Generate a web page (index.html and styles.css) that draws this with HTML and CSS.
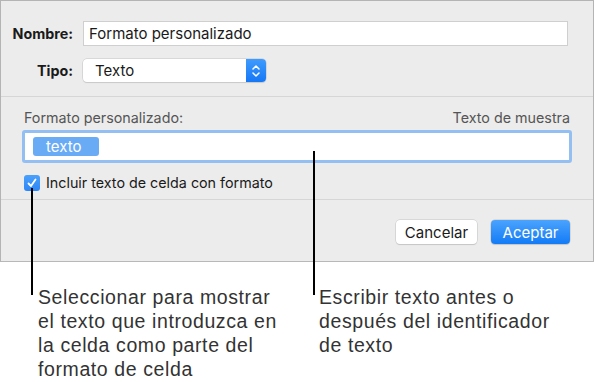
FILE: index.html
```html
<!DOCTYPE html>
<html lang="es">
<head>
  <meta charset="UTF-8">
  <meta name="viewport" content="width=device-width, initial-scale=1.0">
  <title>Formato personalizado</title>
  <link rel="stylesheet" href="styles.css">
</head>
<body>
  <div class="page">
    <div class="dialog">
      <div class="top">
        <label class="label" for="nombre">Nombre:</label>
        <div class="textfield" id="nombre">Formato personalizado</div>

        <label class="label" for="tipo">Tipo:</label>
        <div class="select" id="tipo">
          <span class="select-value">Texto</span>
          <span class="stepper">
            <svg width="10" height="16" viewBox="0 0 10 16">
              <path d="M2 6 L5 3 L8 6" fill="none" stroke="#fff" stroke-width="1.5" stroke-linecap="round" stroke-linejoin="round"/>
              <path d="M2 10 L5 13 L8 10" fill="none" stroke="#fff" stroke-width="1.5" stroke-linecap="round" stroke-linejoin="round"/>
            </svg>
          </span>
        </div>
      </div>

      <div class="middle">
        <div class="format-head">
          <span>Formato personalizado:</span>
          <span>Texto de muestra</span>
        </div>
        <div class="format-field">
          <span class="token">texto</span>
        </div>
        <div class="check-row">
          <span class="checkbox">
            <svg width="12" height="12" viewBox="0 0 12 12">
              <path d="M2.5 6.5 L5 9 L9.5 2.5" fill="none" stroke="#fff" stroke-width="1.8" stroke-linecap="round" stroke-linejoin="round"/>
            </svg>
          </span>
          <span>Incluir texto de celda con formato</span>
        </div>
      </div>

      <div class="footer">
        <button class="btn cancel">Cancelar</button>
        <button class="btn primary">Aceptar</button>
      </div>
    </div>

    <!-- callout leader lines -->
    <div class="leader leader-check"></div>
    <div class="leader leader-field"></div>

    <div class="callouts">
      <p class="callout first">Seleccionar para mostrar el texto que introduzca en la celda como parte del formato de celda</p>
      <p class="callout second">Escribir texto antes o después del identificador de texto</p>
    </div>
  </div>
</body>
</html>
```

FILE: styles.css
```css
body {
  margin: 0;
  background-color: #fff;
  font-family: Inter, "Liberation Sans", sans-serif;
}

.page {
  position: relative;
  width: 594px;
  height: 382px;
}

.dialog {
  width: 594px;
  box-sizing: border-box;
  background-color: #ececec;
  border: 1px solid #b4b4b4;
  border-bottom-color: #b8b8b8;
}

.top {
  display: grid;
  grid-template-columns: 72px 485px;
  column-gap: 10px;
  row-gap: 13px;
  align-items: center;
  padding: 20px 0 14px 0;
  border-bottom: 1px solid #d6d6d6;
}

.label {
  font-size: 14.3px;
  font-weight: 700;
  color: #1a1a1a;
  text-align: right;
}

.textfield {
  height: 25px;
  box-sizing: border-box;
  background-color: #fff;
  border: 1px solid #cfcfcf;
  padding: 0 5px;
  font-size: 15px;
  line-height: 23px;
  color: #1a1a1a;
}

.select {
  display: flex;
  width: 183px;
  height: 23px;
  box-sizing: border-box;
  background-color: #fff;
  border-radius: 4px;
  box-shadow: 0 0 0 0.5px #c4c4c4, 0 1px 1px rgba(0, 0, 0, 0.12);
  overflow: hidden;
}

.select-value {
  flex: 1;
  padding-left: 12px;
  font-size: 15px;
  line-height: 23px;
  color: #1a1a1a;
}

.stepper {
  display: flex;
  align-items: center;
  justify-content: center;
  width: 20px;
  background: linear-gradient(#3f9bfd, #1677f6);
}

.middle {
  padding: 12px 21px 0 21px;
  height: 103px;
  box-sizing: border-box;
  border-bottom: 1px solid #d6d6d6;
}

.format-head {
  display: flex;
  justify-content: space-between;
  padding: 0 2px 0 2px;
  font-size: 14.3px;
  color: #555;
}

.format-field {
  display: flex;
  align-items: center;
  height: 33px;
  box-sizing: border-box;
  margin-top: 4px;
  padding-left: 8px;
  background-color: #fff;
  border: 3px solid #93bff2;
  border-radius: 3px;
}

.token {
  display: inline-block;
  width: 66px;
  height: 19px;
  box-sizing: border-box;
  padding-left: 13px;
  background-color: #6aabf5;
  border-radius: 3px;
  color: #fff;
  font-size: 15px;
  line-height: 19px;
}

.check-row {
  display: flex;
  align-items: center;
  gap: 6px;
  margin-top: 11px;
  padding-left: 2px;
  font-size: 14.3px;
  color: #1a1a1a;
}

.checkbox {
  display: flex;
  align-items: center;
  justify-content: center;
  width: 16px;
  height: 16px;
  border-radius: 3px;
  background: linear-gradient(#4aa0fb, #2c86f6);
}

.footer {
  display: flex;
  justify-content: flex-end;
  gap: 14px;
  padding: 20px 23px 17px 0;
}

.btn {
  height: 24px;
  padding: 0;
  font-family: Inter, "Liberation Sans", sans-serif;
  font-size: 15px;
  color: #1a1a1a;
  background-color: #fff;
  border: none;
  border-radius: 4px;
  box-shadow: 0 0 0 0.5px #c4c4c4, 0 1px 1px rgba(0, 0, 0, 0.15);
}

.btn.cancel {
  width: 81px;
}

.btn.primary {
  width: 79px;
  color: #fff;
  background: linear-gradient(#4ba3fd, #137bf6);
}

.leader {
  position: absolute;
  width: 2px;
  background-color: #000;
}

.leader-check {
  left: 31px;
  top: 188px;
  height: 107px;
}

.leader-field {
  left: 313px;
  top: 151px;
  height: 144px;
}

.callouts {
  display: flex;
  padding: 23px 0 0 38px;
}

.callout {
  margin: 0;
  font-family: "Liberation Sans", Arial, sans-serif;
  font-size: 19.5px;
  letter-spacing: 0.6px;
  line-height: 24px;
  color: #333;
}

.callout.first {
  width: 250px;
  margin-right: 31px;
}

.callout.second {
  width: 252px;
}
```
